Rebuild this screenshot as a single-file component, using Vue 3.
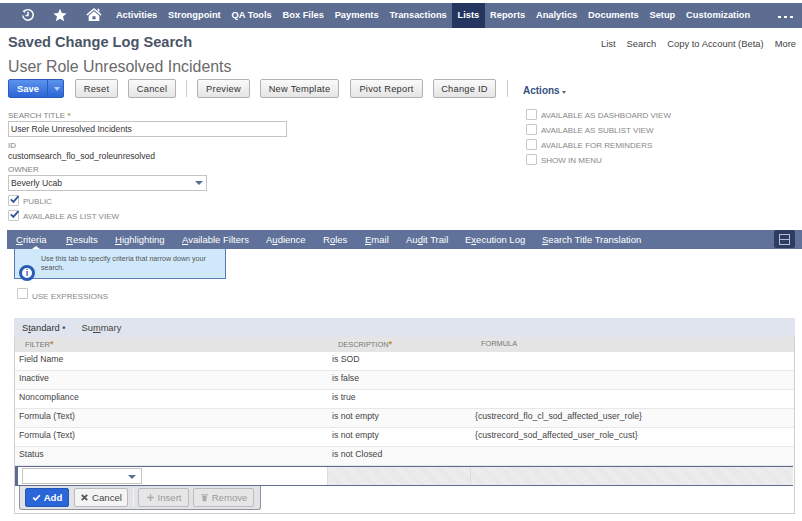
<template>
  <div class="page">
    <nav class="topnav">
      <div class="nav-icons">
        <svg class="ic-history" viewBox="0 0 16 16" fill="none" stroke="#fff" stroke-width="1.7">
          <path d="M3.2 4.2 A6 6 0 1 1 2 8.6" />
          <path d="M8 4.4 V8.6 H5.2" />
          <path d="M1.6 3.4 L4.8 2.4 L4.4 5.6 Z" fill="#fff" stroke="none" />
        </svg>
        <svg class="ic-star" viewBox="0 0 16 16" fill="#fff">
          <path d="M8 .8 L10.1 5.8 L15.6 6.2 L11.4 9.7 L12.8 15 L8 12.2 L3.2 15 L4.6 9.7 L.4 6.2 L5.9 5.8 Z" />
        </svg>
        <svg class="ic-home" viewBox="0 0 18 16" fill="#fff">
          <path d="M9 .6 L17.6 8 L16.4 9.2 L9 3 L1.6 9.2 L.4 8 Z" />
          <path d="M13 1.4 H15 V5.4 L13 3.6 Z" />
          <path fill-rule="evenodd" d="M9 4.4 L15 9.4 V15.4 H3 V9.4 Z M7.2 10 V13.4 H10.8 V10 Z" />
        </svg>
      </div>
      <a v-for="n in navItems" :key="n" class="nav-item" :class="{ active: n === 'Lists' }">{{ n }}</a>
      <span class="nav-more"><i></i><i></i><i></i></span>
    </nav>

    <header class="head-row">
      <h1 class="page-type">Saved Change Log Search</h1>
      <div class="head-links">
        <a>List</a><a>Search</a><a>Copy to Account (Beta)</a><a>More</a>
      </div>
    </header>
    <h2 class="record-name">User Role Unresolved Incidents</h2>

    <div class="toolbar">
      <div class="save-btn">
        <span class="save-main">Save</span>
        <span class="save-arrow"></span>
      </div>
      <button class="btn w-reset">Reset</button>
      <button class="btn w-cancel">Cancel</button>
      <span class="tool-sep"></span>
      <button class="btn w-preview">Preview</button>
      <button class="btn w-template">New Template</button>
      <button class="btn w-pivot">Pivot Report</button>
      <button class="btn w-change">Change ID</button>
      <span class="tool-sep sep-2"></span>
      <span class="actions">Actions <i class="caret"></i></span>
    </div>

    <section class="form-grid">
      <div class="form-left">
        <div class="lbl first">SEARCH TITLE <b class="req">*</b></div>
        <div class="input title-input">User Role Unresolved Incidents</div>
        <div class="lbl id-lbl">ID</div>
        <div class="value">customsearch_flo_sod_roleunresolved</div>
        <div class="lbl owner-lbl">OWNER</div>
        <div class="input owner-input">Beverly Ucab<i class="drop"></i></div>
        <label v-for="c in leftChecks" :key="c" class="check-row">
          <span class="cb">
            <svg viewBox="0 0 12 12" fill="none" stroke="#2f5596" stroke-width="2"><path d="M2 5.8 L4.8 8.6 L10.4 2.2" /></svg>
          </span>
          <span class="cb-text">{{ c }}</span>
        </label>
      </div>
      <div class="form-right">
        <label v-for="c in rightChecks" :key="c" class="check-row right-row">
          <span class="cb"></span>
          <span class="cb-text">{{ c }}</span>
        </label>
      </div>
    </section>

    <div class="tabs">
      <a v-for="t in tabs" :key="t.pre + t.key" class="tab" :style="{ width: t.w + 'px' }">{{ t.pre }}<u>{{ t.key }}</u>{{ t.post }}</a>
      <span class="tabs-menu"><i></i><i></i></span>
      <span class="tab-notch"></span>
    </div>

    <div class="tab-body">
      <div class="hint">
        <p>Use this tab to specify criteria that narrow down your search.</p>
        <span class="hint-icon">i</span>
      </div>
      <label class="check-row expr-row">
        <span class="cb"></span>
        <span class="cb-text">USE EXPRESSIONS</span>
      </label>

      <div class="sublist">
        <div class="sub-tabs">
          <span class="sub-tab on">S<u>t</u>andard <b>•</b></span>
          <span class="sub-tab">Su<u>m</u>mary</span>
        </div>
        <div class="row head">
          <span>FILTER<b class="req">*</b></span>
          <span class="desc-head">DESCRIPTION<b class="req">*</b></span>
          <span>FORMULA</span>
        </div>
        <div v-for="(r, i) in rows" :key="i" class="row" :class="{ alt: i % 2 }">
          <span>{{ r[0] }}</span><span>{{ r[1] }}</span><span>{{ r[2] }}</span>
        </div>
        <div class="edit-row">
          <div class="edit-first"><div class="edit-select"><i class="drop"></i></div></div>
          <div class="edit-cell"></div>
          <div class="edit-cell last"></div>
        </div>
        <div class="edit-bar-wrap">
          <div class="edit-bar">
            <button class="mini add">
              <svg viewBox="0 0 12 12" fill="none" stroke="#fff" stroke-width="2.2"><path d="M1.6 6.2 L4.6 9 L10.4 3" /></svg>Add
            </button>
            <button class="mini cancel">
              <svg viewBox="0 0 12 12" fill="none" stroke="#555" stroke-width="2.4"><path d="M2.4 2.4 L9.6 9.6 M9.6 2.4 L2.4 9.6" /></svg>Cancel
            </button>
            <span class="bar-sep"></span>
            <button class="mini off insert">
              <svg viewBox="0 0 12 12" fill="none" stroke="#aaa" stroke-width="2"><path d="M6 1.5 V10.5 M1.5 6 H10.5" /></svg>Insert
            </button>
            <button class="mini off remove">
              <svg viewBox="0 0 12 12" fill="#aaa"><path d="M1.5 1.5 H10.5 V3 H1.5 Z M3 3.8 H9 L8.4 11 H3.6 Z" /></svg>Remove
            </button>
          </div>
        </div>
      </div>
    </div>
  </div>
</template>

<script setup>
const navItems = ['Activities', 'Strongpoint', 'QA Tools', 'Box Files', 'Payments', 'Transactions', 'Lists', 'Reports', 'Analytics', 'Documents', 'Setup', 'Customization']

const leftChecks = ['PUBLIC', 'AVAILABLE AS LIST VIEW']
const rightChecks = ['AVAILABLE AS DASHBOARD VIEW', 'AVAILABLE AS SUBLIST VIEW', 'AVAILABLE FOR REMINDERS', 'SHOW IN MENU']

const tabs = [
  { pre: '', key: 'C', post: 'riteria', w: 50 },
  { pre: '', key: 'R', post: 'esults', w: 49 },
  { pre: '', key: 'H', post: 'ighlighting', w: 67 },
  { pre: '', key: 'A', post: 'vailable Filters', w: 84 },
  { pre: 'A', key: 'u', post: 'dience', w: 57 },
  { pre: 'R', key: 'o', post: 'les', w: 42 },
  { pre: '', key: 'E', post: 'mail', w: 41 },
  { pre: 'Au', key: 'd', post: 'it Trail', w: 59 },
  { pre: 'E', key: 'x', post: 'ecution Log', w: 77 },
  { pre: '', key: 'S', post: 'earch Title Translation', w: 150 }
]

const rows = [
  ['Field Name', 'is SOD', ''],
  ['Inactive', 'is false', ''],
  ['Noncompliance', 'is true', ''],
  ['Formula (Text)', 'is not empty', '{custrecord_flo_cl_sod_affected_user_role}'],
  ['Formula (Text)', 'is not empty', '{custrecord_sod_affected_user_role_cust}'],
  ['Status', 'is not Closed', '']
]
</script>

<style>
html, body { margin: 0; background: #fff; }
</style>

<style scoped>
.page {
  width: 802px;
  height: 521px;
  overflow: hidden;
  padding-top: 3px;
  box-sizing: border-box;
  font-family: "Liberation Sans", Arial, sans-serif;
  color: #333;
  background: #fff;
}

/* top nav */
.topnav {
  height: 25px;
  background: #5d6d92;
  display: flex;
  align-items: center;
  color: #fff;
}
.nav-icons { display: flex; align-items: center; width: 110.5px; flex: none; position: relative; height: 25px; }
.ic-history { position: absolute; left: 21px; top: 5px; width: 14px; height: 14px; }
.ic-star { position: absolute; left: 53px; top: 5px; width: 14px; height: 14px; }
.ic-home { position: absolute; left: 86px; top: 4px; width: 16px; height: 15px; }
.nav-item {
  font-size: 9.3px;
  font-weight: 700;
  line-height: 25px;
  padding: 0 5.4px;
  white-space: nowrap;
}
.nav-item.active { background: #24365f; }
.nav-more { margin-left: 22px; display: flex; gap: 3px; margin-top: 2px; }
.nav-more i { display: block; width: 3px; height: 2px; background: #fff; }

/* heading */
.head-row {
  display: flex;
  justify-content: space-between;
  align-items: center;
  padding: 3px 6px 0 8px;
  height: 22px;
}
.page-type { margin: 0; font-size: 14.6px; font-weight: 700; color: #4a5568; }
.head-links { display: flex; gap: 11px; font-size: 9.4px; color: #444; margin-top: 2px; }
.record-name {
  margin: 4px 0 0 8px;
  font-size: 15.9px;
  line-height: 20px;
  font-weight: 400;
  color: #6a6a6a;
}

/* toolbar */
.toolbar { display: flex; align-items: center; margin: 2px 0 0 8px; height: 19px; }
.save-btn {
  display: flex;
  width: 56px;
  height: 19px;
  border-radius: 2px;
  background: linear-gradient(#5a93ee, #2d66d6);
  border: 1px solid #2a5cb8;
  box-sizing: border-box;
  color: #fff;
  font-size: 9.4px;
  font-weight: 700;
  line-height: 17px;
}
.save-main { width: 38px; text-align: center; border-right: 1px solid #2a5cb8; }
.save-arrow {
  width: 0; height: 0;
  margin: 7px 0 0 6px;
  border: 3px solid transparent;
  border-top: 4px solid #b8d0f5;
}
.btn {
  height: 19px;
  padding: 0;
  box-sizing: border-box;
  border: 1px solid #b2b2b2;
  border-radius: 2px;
  background: linear-gradient(#fafafa, #e5e5e5);
  font-family: inherit;
  font-size: 9.3px;
  letter-spacing: .25px;
  color: #333;
  font-weight: 400;
  flex: none;
}
.w-reset { width: 43px; margin-left: 11px; }
.w-cancel { width: 48px; margin-left: 10px; }
.w-preview { width: 53px; margin-left: 10px; }
.w-template { width: 79px; margin-left: 10px; }
.w-pivot { width: 73px; margin-left: 11px; }
.w-change { width: 63px; margin-left: 10px; }
.tool-sep { width: 1px; height: 17px; background: #ccc; margin-left: 10px; }
.sep-2 { margin-left: 11px; }
.actions { margin-left: 15px; margin-top: 4px; font-size: 10px; font-weight: 700; color: #35517f; }
.caret {
  display: inline-block; width: 0; height: 0;
  border: 2.5px solid transparent; border-top: 3px solid #666;
  vertical-align: -2px;
}

/* main form */
.form-grid { display: flex; height: 132px; padding-left: 8px; }
.form-left { width: 518px; flex: none; }
.form-right { padding-top: 7px; }
.lbl { font-size: 8px; line-height: 10px; color: #808080; }
.first { margin-top: 13px; }
.req { color: #b78a3e; font-weight: 700; }
.input {
  box-sizing: border-box;
  border: 1px solid #c4c4c4;
  height: 16px;
  font-size: 8.6px;
  line-height: 14px;
  padding-left: 2px;
  color: #333;
  position: relative;
}
.title-input { width: 279px; margin-top: 0; }
.id-lbl { margin-top: 4px; }
.value { font-size: 8.6px; line-height: 10px; color: #333; }
.owner-lbl { margin-top: 4px; }
.owner-input { width: 199px; }
.drop {
  position: absolute;
  right: 3px;
  top: 5px;
  width: 0; height: 0;
  border: 4px solid transparent;
  border-top: 4px solid #5d6d92;
}
.check-row { display: flex; align-items: flex-end; height: 15px; }
.cb {
  width: 11px; height: 11px;
  box-sizing: border-box;
  border: 1px solid #c8c8c8;
  border-radius: 1px;
  display: block;
  flex: none;
  background: #fff;
}
.cb svg { display: block; width: 11px; height: 11px; margin: -2px 0 0 -.5px; }
.cb-text { font-size: 8px; line-height: 9px; color: #888; margin-left: 4px; white-space: nowrap; }

/* tabs */
.tabs {
  height: 19px;
  margin-left: 7px;
  background: #607299;
  display: flex;
  align-items: center;
  position: relative;
  padding-left: 9px;
}
.tab { font-size: 9.5px; color: #fff; white-space: nowrap; flex: none; }
.tabs-menu {
  position: absolute;
  right: 7px;
  top: 0;
  width: 21px;
  height: 18px;
  background: #2d3d62;
  border-radius: 2px;
  display: flex;
  flex-direction: column;
  justify-content: center;
  align-items: center;
  gap: 0;
}
.tabs-menu i { display: block; width: 11px; height: 6px; box-sizing: border-box; border: 1px solid #b6bfd2; }
.tabs-menu i + i { border-top: 0; height: 5px; }
.tab-notch {
  position: absolute;
  left: 25px;
  bottom: 0;
  width: 0; height: 0;
  border: 4px solid transparent;
  border-top: 0;
  border-bottom: 3px solid #fff;
}

/* tab content */
.tab-body { padding-left: 14px; position: relative; }
.hint {
  width: 212px;
  height: 30px;
  box-sizing: border-box;
  background: #cfe9fb;
  border: 1px solid #5d7ab0;
  border-top: 0;
  position: relative;
  padding: 6px 4px 0 26px;
}
.hint p { margin: 0; font-size: 7.1px; line-height: 9px; color: #555; }
.hint-icon {
  position: absolute;
  left: 4px;
  top: 16px;
  width: 16px;
  height: 16px;
  box-sizing: border-box;
  border: 3px solid #2b5bb5;
  border-radius: 50%;
  background: #fff;
  color: #2b5bb5;
  font-size: 9px;
  font-weight: 700;
  line-height: 10px;
  text-align: center;
}
.expr-row { margin: 7px 0 0 3px; height: 15px; }
.expr-row .cb { margin-bottom: 2px; }

.sublist {
  width: 781px;
  margin-top: 17px;
  box-sizing: border-box;
  height: 196px;
  border: 1px solid #d0d0d0;
  border-top: 0;
}
.sub-tabs {
  height: 19px;
  margin: 0 -1px;
  background: #e0e4ee;
  display: flex;
  align-items: center;
  padding-left: 8px;
  gap: 16px;
  font-size: 9.3px;
  color: #444;
}
.sub-tab.on { color: #333; }
.sub-tab b { font-size: 9px; color: #35517f; }
.row {
  height: 19px;
  box-sizing: border-box;
  display: grid;
  grid-template-columns: 313px 143px 1fr;
  align-items: center;
  padding-left: 4px;
  border-bottom: 1px solid #e8e8e8;
  font-size: 8.7px;
  color: #444;
  background: #fff;
  padding-bottom: 4px;
}
.row.alt { background: #fafafa; }
.row.head {
  height: 15px;
  background: #e5e5e5;
  font-size: 7.4px;
  color: #777;
  border-bottom: 0;
  padding-bottom: 2px;
  padding-left: 10px;
  grid-template-columns: 313px 143px 1fr;
}
.row.head .req { font-size: 9px; }
.edit-row {
  height: 20px;
  box-sizing: border-box;
  display: grid;
  grid-template-columns: 309px 143px 1fr;
  border-top: 1px solid #5d6d92;
  border-bottom: 1px solid #5d6d92;
  border-left: 3px solid #5d6d92;
  margin-right: 1px;
}
.edit-first { background: #fff; padding: 1px 0 0 4px; }
.edit-select {
  position: relative;
  box-sizing: border-box;
  width: 120px;
  height: 16px;
  border: 1px solid #c4c4c4;
  background: #fff;
}
.edit-select .drop { right: 5px; top: 6px; }
.edit-cell {
  background: repeating-linear-gradient(45deg, #efefef 0 1px, #e6e6e6 1px 2px);
  border-left: 1px solid #ddd;
}
.edit-bar-wrap { padding-left: 4px; }
.edit-bar {
  width: 242px;
  height: 24px;
  box-sizing: border-box;
  background: #e1e3e6;
  border: 1px solid #8f949c;
  border-top: 0;
  border-radius: 0 0 3px 3px;
  display: flex;
  align-items: center;
  padding-left: 5px;
}
.mini {
  height: 19px;
  box-sizing: border-box;
  border-radius: 2px;
  border: 1px solid #bbb;
  background: #f4f4f4;
  font-family: inherit;
  font-size: 9.6px;
  padding: 0;
  display: flex;
  align-items: center;
  justify-content: center;
  gap: 3px;
  flex: none;
  color: #444;
}
.mini svg { width: 9px; height: 9px; }
.add { width: 44px; background: #2b66d9; border-color: #2456b8; color: #fff; font-weight: 700; }
.cancel { width: 54px; margin-left: 5px; }
.bar-sep { width: 1px; height: 17px; background: #f5f5f5; margin: 0 4.5px; }
.off { color: #9a9a9a; background: #e6e6e6; border-color: #bcbcbc; }
.insert { width: 51px; }
.remove { width: 61px; margin-left: 4px; }
</style>
